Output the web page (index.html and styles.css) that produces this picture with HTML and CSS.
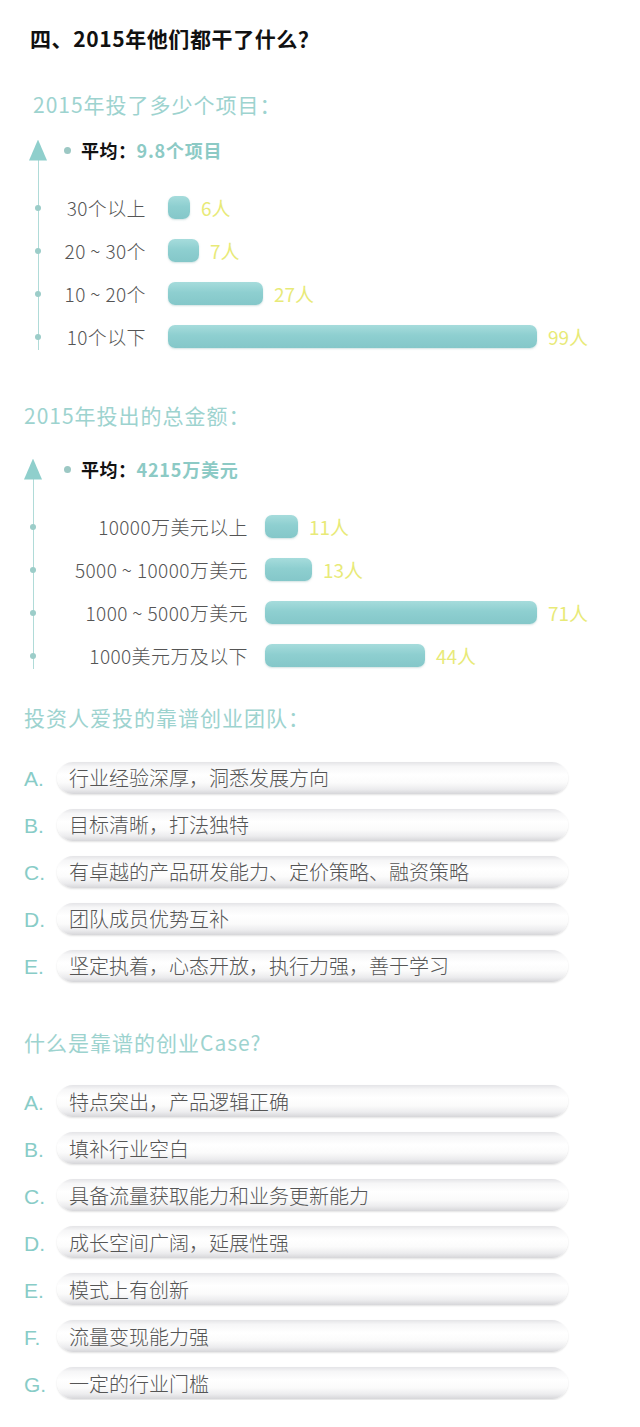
FILE: index.html
```html
<!DOCTYPE html>
<html lang="zh-CN">
<head>
<meta charset="utf-8">
<title>2015年他们都干了什么</title>
<link rel="stylesheet" href="styles.css">
</head>
<body>
<main class="page">
  <h1 class="title">四、2015年他们都干了什么？</h1>

  <section class="chart chart-count">
    <h2 class="heading heading-count">2015年投了多少个项目：</h2>
    <div class="chart-body">
      <div class="avg-row">
        <span class="arrow"></span>
        <span class="avg-dot"></span>
        <span class="avg-label">平均：</span><span class="avg-value">9.8个项目</span>
      </div>
      <div class="data-row">
        <span class="dot"></span>
        <span class="label">30个以上</span>
        <span class="bar-wrap"><span class="bar" style="width:22px"></span><span class="value">6人</span></span>
      </div>
      <div class="data-row">
        <span class="dot"></span>
        <span class="label">20 ~ 30个</span>
        <span class="bar-wrap"><span class="bar" style="width:31px"></span><span class="value">7人</span></span>
      </div>
      <div class="data-row">
        <span class="dot"></span>
        <span class="label">10 ~ 20个</span>
        <span class="bar-wrap"><span class="bar" style="width:95px"></span><span class="value">27人</span></span>
      </div>
      <div class="data-row">
        <span class="dot"></span>
        <span class="label">10个以下</span>
        <span class="bar-wrap"><span class="bar" style="width:369px"></span><span class="value">99人</span></span>
      </div>
    </div>
  </section>

  <section class="chart chart-amount">
    <h2 class="heading">2015年投出的总金额：</h2>
    <div class="chart-body">
      <div class="avg-row">
        <span class="arrow"></span>
        <span class="avg-dot"></span>
        <span class="avg-label">平均：</span><span class="avg-value">4215万美元</span>
      </div>
      <div class="data-row">
        <span class="dot"></span>
        <span class="label">10000万美元以上</span>
        <span class="bar-wrap"><span class="bar" style="width:33px"></span><span class="value">11人</span></span>
      </div>
      <div class="data-row">
        <span class="dot"></span>
        <span class="label">5000 ~ 10000万美元</span>
        <span class="bar-wrap"><span class="bar" style="width:47px"></span><span class="value">13人</span></span>
      </div>
      <div class="data-row">
        <span class="dot"></span>
        <span class="label">1000 ~ 5000万美元</span>
        <span class="bar-wrap"><span class="bar" style="width:272px"></span><span class="value">71人</span></span>
      </div>
      <div class="data-row">
        <span class="dot"></span>
        <span class="label">1000美元万及以下</span>
        <span class="bar-wrap"><span class="bar" style="width:160px"></span><span class="value">44人</span></span>
      </div>
    </div>
  </section>

  <section class="list-section list-team">
    <h2 class="heading">投资人爱投的靠谱创业团队：</h2>
    <ul class="options">
      <li class="option"><span class="letter">A.</span><span class="pill">行业经验深厚，洞悉发展方向</span></li>
      <li class="option"><span class="letter">B.</span><span class="pill">目标清晰，打法独特</span></li>
      <li class="option"><span class="letter">C.</span><span class="pill">有卓越的产品研发能力、定价策略、融资策略</span></li>
      <li class="option"><span class="letter">D.</span><span class="pill">团队成员优势互补</span></li>
      <li class="option"><span class="letter">E.</span><span class="pill">坚定执着，心态开放，执行力强，善于学习</span></li>
    </ul>
  </section>

  <section class="list-section list-case">
    <h2 class="heading">什么是靠谱的创业Case?</h2>
    <ul class="options">
      <li class="option"><span class="letter">A.</span><span class="pill">特点突出，产品逻辑正确</span></li>
      <li class="option"><span class="letter">B.</span><span class="pill">填补行业空白</span></li>
      <li class="option"><span class="letter">C.</span><span class="pill">具备流量获取能力和业务更新能力</span></li>
      <li class="option"><span class="letter">D.</span><span class="pill">成长空间广阔，延展性强</span></li>
      <li class="option"><span class="letter">E.</span><span class="pill">模式上有创新</span></li>
      <li class="option"><span class="letter">F.</span><span class="pill">流量变现能力强</span></li>
      <li class="option"><span class="letter">G.</span><span class="pill">一定的行业门槛</span></li>
    </ul>
  </section>
</main>
</body>
</html>
```

FILE: styles.css
```css
* { box-sizing: border-box; }

html, body {
  margin: 0;
  padding: 0;
  background: #ffffff;
}

body {
  font-family: "Noto Sans CJK SC", "Noto Sans", sans-serif;
  color: #555555;
}

.page {
  width: 640px;
  padding: 24px 0 0 24px;
}

.title {
  margin: 0 0 0 6px;
  font-size: 21px;
  line-height: 28px;
  font-weight: 700;
  letter-spacing: 0.6px;
  color: #111111;
}

.heading {
  margin: 0;
  font-size: 21px;
  line-height: 28px;
  font-weight: 400;
  letter-spacing: 1px;
  color: #9dd3cf;
}

.heading-count {
  margin-top: 38px;
  margin-left: 9px;
}

.chart-count .chart-body {
  margin-top: 20px;
  margin-left: 5px;
}

.chart-amount .heading {
  margin-top: 43px;
}

.chart-amount .chart-body {
  margin-top: 28px;
}

.chart-body {
  background: linear-gradient(#b0dbd8, #b0dbd8) no-repeat 8.5px 10px / 1.2px calc(100% - 18px);
}

.avg-row {
  display: flex;
  align-items: center;
  height: 24px;
  margin-bottom: 24px;
}

.arrow {
  width: 18px;
  height: 21px;
  background: #8fcfcc;
  clip-path: polygon(50% 0, 100% 100%, 0 100%);
  flex: none;
}

.avg-dot {
  width: 7px;
  height: 7px;
  border-radius: 50%;
  background: #9cc8c4;
  margin-right: 10px;
  flex: none;
}

.chart-count .avg-dot { margin-left: 17px; }
.chart-amount .avg-dot { margin-left: 22px; }

.avg-label {
  font-size: 18px;
  font-weight: 700;
  color: #111111;
  letter-spacing: 0.5px;
}

.avg-value {
  font-size: 18px;
  font-weight: 700;
  color: #8ccac5;
  letter-spacing: 0.8px;
}

.data-row {
  display: flex;
  align-items: center;
  height: 43px;
}

.dot {
  width: 18px;
  display: flex;
  justify-content: center;
  flex: none;
}

.dot::before {
  content: "";
  width: 6px;
  height: 6px;
  border-radius: 50%;
  background: #9ccdc9;
}

.label {
  flex: none;
  text-align: right;
  font-size: 19px;
  line-height: 43px;
  font-weight: 300;
  letter-spacing: 0.4px;
  color: #555555;
  white-space: nowrap;
}

.chart-count .label { width: 99px; margin-right: 22px; }
.chart-amount .label { width: 206px; margin-right: 17px; }

.bar-wrap {
  display: flex;
  align-items: center;
}

.bar {
  height: 23px;
  border-radius: 7px;
  background: linear-gradient(to bottom, #a6dcdc 0%, #8ecfd0 45%, #84c7c9 100%);
  box-shadow: 0 1px 2px rgba(120, 170, 170, 0.35);
  flex: none;
}

.value {
  margin-left: 11px;
  font-size: 19px;
  color: #e8ea78;
  white-space: nowrap;
}

.list-team .heading {
  margin-top: 26px;
}

.list-case .heading {
  margin-top: 46px;
}

.options {
  list-style: none;
  margin: 0;
  padding: 0;
  display: flex;
  flex-direction: column;
  gap: 14px;
}

.list-team .options { margin-top: 30px; }
.list-case .options { margin-top: 28.5px; }

.option {
  display: flex;
  align-items: center;
  height: 33px;
}

.letter {
  width: 33px;
  flex: none;
  font-family: "Liberation Sans", "Noto Sans", sans-serif;
  font-size: 21px;
  line-height: 33px;
  padding-top: 2px;
  color: #88ccc7;
}

.pill {
  width: 511px;
  height: 32px;
  border-radius: 16px;
  padding-left: 12px;
  display: flex;
  align-items: center;
  font-size: 20px;
  font-weight: 300;
  color: #555555;
  white-space: nowrap;
  background: linear-gradient(to bottom, #e4e4e7 0%, #f6f6f7 14%, #ffffff 40%, #fbfbfb 65%, #ececee 85%, #d6d6d9 100%);
  box-shadow: 0 1px 2px rgba(0, 0, 0, 0.12);
}
```
